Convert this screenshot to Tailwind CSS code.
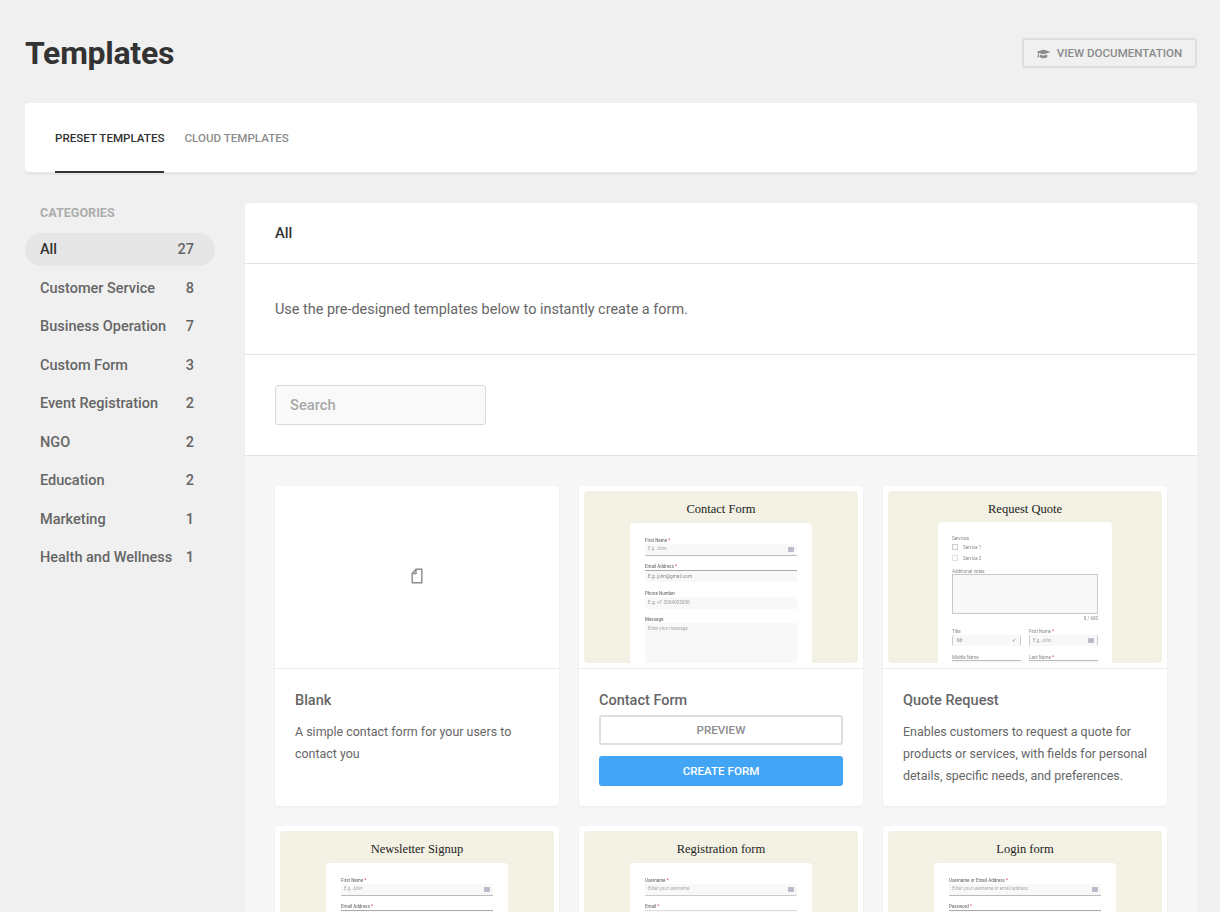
<!DOCTYPE html>
<html lang="en">
<head>
  <meta charset="UTF-8" />
  <title>Templates</title>
  <script src="https://cdn.jsdelivr.net/npm/@tailwindcss/browser@4"></script>
</head>
<body class="bg-[#f0f0f0] text-[#383838] font-[Roboto,sans-serif] h-[912px] overflow-hidden">
  <div class="pl-[25px] pr-[23px]">
    <!-- Header -->
    <header class="flex items-center justify-between pt-[38px] h-[103px] pb-[35px]">
      <h1 class="text-[32px] leading-[30px] font-bold tracking-[-0.27px] text-[#333]">Templates</h1>
      <button class="h-[30px] w-[175px] border-2 border-[#dedede] rounded-[3px] pt-px flex items-center justify-center gap-[7px] text-[11.55px] font-medium text-[#8a8a8a]">
        <svg class="w-[13px] h-[11px]" viewBox="0 0 640 512" fill="#8a8a8a"><path d="M622 160 334 71a48 48 0 0 0-28 0L18 160c-24 7-24 41 0 48l50 16c-11 14-18 31-19 50-9 5-15 15-15 26 0 10 5 19 13 25L21 423c-2 10 5 19 15 19h56c10 0 17-9 15-19L81 325c8-6 13-15 13-25 0-11-6-21-14-26 1-19 11-36 26-47l200 62c13 4 28 6 28 0l288-89c24-7 24-41 0-48zM352 352c-28 9-53 4-64 0l-145-45-15 115c0 35 86 64 192 64s192-29 192-64l-15-115z"/></svg>
        VIEW DOCUMENTATION
      </button>
    </header>

    <!-- Tabs -->
    <div class="bg-white rounded-[4px] h-[69px] px-[30px] flex gap-[20px] shadow-[0_3px_0_#e6e6e6] text-[11.6px] font-medium">
      <a class="flex items-center pt-[2px] shadow-[inset_0_-2px_0_#333] text-[#333] h-[70px]">PRESET TEMPLATES</a>
      <a class="flex items-center pt-[2px] text-[#8c8c8c] h-[70px]">CLOUD TEMPLATES</a>
    </div>

    <div class="flex gap-[30px] mt-[31px]">
      <!-- Sidebar -->
      <aside class="w-[190px] shrink-0">
        <div class="px-[15px] text-[12.6px] font-bold text-[#adadad] leading-[20px] mb-[10px]">CATEGORIES</div>
        <ul class="flex flex-col text-[14.5px] font-medium text-[#666]">
          <li class="h-[33px] rounded-full bg-[#e6e6e6] pl-[15px] pr-[21px] flex items-center justify-between text-[#333]"><span>All</span><span class="text-[#666]">27</span></li>
          <li class="h-[33px] mt-[6px] pl-[15px] pr-[21px] flex items-center justify-between"><span>Customer Service</span><span>8</span></li>
          <li class="h-[33px] mt-[5px] pl-[15px] pr-[21px] flex items-center justify-between"><span>Business Operation</span><span>7</span></li>
          <li class="h-[33px] mt-[6px] pl-[15px] pr-[21px] flex items-center justify-between"><span>Custom Form</span><span>3</span></li>
          <li class="h-[33px] mt-[5px] pl-[15px] pr-[21px] flex items-center justify-between"><span>Event Registration</span><span>2</span></li>
          <li class="h-[33px] mt-[6px] pl-[15px] pr-[21px] flex items-center justify-between"><span>NGO</span><span>2</span></li>
          <li class="h-[33px] mt-[5px] pl-[15px] pr-[21px] flex items-center justify-between"><span>Education</span><span>2</span></li>
          <li class="h-[33px] mt-[6px] pl-[15px] pr-[21px] flex items-center justify-between"><span>Marketing</span><span>1</span></li>
          <li class="h-[33px] mt-[5px] pl-[15px] pr-[21px] flex items-center justify-between"><span>Health and Wellness</span><span>1</span></li>
        </ul>
      </aside>

      <!-- Main -->
      <main class="flex-1 bg-white rounded-t-[4px]">
        <div class="h-[61px] px-[30px] flex items-center border-b border-[#e3e3e3] text-[14.8px] font-medium text-[#333]">All</div>
        <div class="h-[91px] px-[30px] pt-[2px] flex items-center border-b border-[#e3e3e3] text-[14.45px] text-[#666]">Use the pre-designed templates below to instantly create a form.</div>
        <div class="h-[101px] px-[30px] flex items-center border-b border-[#e3e3e3]">
          <div class="w-[211px] h-[40px] border border-[#d9d9d9] rounded-[3px] bg-[#f9f9f9] px-[14px] flex items-center text-[14.7px] font-medium text-[#a8a8a8]">Search</div>
        </div>

        <!-- Template grid -->
        <div class="bg-[#f7f7f7] p-[30px] grid grid-cols-3 gap-[20px]">
          <!-- Blank -->
          <article class="bg-white rounded-[4px] h-[320px] shadow-[0_1px_3px_rgba(0,0,0,0.06)]">
            <div class="h-[183px] border-b border-[#ececec] flex items-center justify-center">
              <svg class="w-[12px] h-[16px] mt-[-2px]" viewBox="0 0 12 16" fill="none" stroke="#8c8c8c" stroke-width="1.4"><path d="M1.2 14.8V5.5L5 1.2h5.8v13.6z"/><path d="M5 1.5v4H1.5"/></svg>
            </div>
            <div class="px-[20px] pt-[21px]">
              <h3 class="text-[14.5px] leading-[22px] font-medium text-[#666]">Blank</h3>
              <p class="mt-[9px] text-[12.45px] leading-[22px] text-[#666]">A simple contact form for your users to contact you</p>
            </div>
          </article>

          <!-- Contact Form -->
          <article class="bg-white rounded-[4px] h-[320px] shadow-[0_1px_3px_rgba(0,0,0,0.06)]">
            <div class="h-[183px] border-b border-[#ececec] p-[5px]">
              <div class="h-[172px] rounded-[4px] bg-[#f3f1e3] overflow-hidden flex flex-col items-center">
                <div class="h-[32px] shrink-0 pt-[10px] font-['Liberation_Serif',serif] text-[12.5px] leading-[16px] text-[#222]">Contact Form</div>
                <div class="w-[182px] flex-1 bg-white rounded-t-[4px] px-[15px] pt-[13.5px] text-[4.5px] text-[#777] blur-[0.3px]">
                  <div class="h-[7px] leading-[7px] font-medium">First Name <span class="text-[#e0245e]">*</span></div>
                  <div class="h-[12px] bg-[#f8f8f8] border-b border-[#bbb] rounded-[1px] px-[3px] flex items-center justify-between text-[#aaa]"><span>E.g. John</span><span class="w-[6px] h-[5px] bg-[#b8bccb] rounded-[1px]"></span></div>
                  <div class="h-[7px] leading-[7px] font-medium mt-[7.5px]">Email Address <span class="text-[#e0245e]">*</span></div>
                  <div class="h-[12px] bg-[#f8f8f8] border-t border-[#aaa] px-[3px] flex items-center text-[4.7px] text-[#888]">E.g. john@gmail.com</div>
                  <div class="h-[7px] leading-[7px] font-medium mt-[7.5px]">Phone Number</div>
                  <div class="h-[12px] bg-[#f8f8f8] rounded-[1px] px-[3px] flex items-center text-[4.7px] text-[#999]">E.g. +1 3004005000</div>
                  <div class="h-[7px] leading-[7px] font-medium mt-[7.5px]">Message</div>
                  <div class="h-[50px] bg-[#f8f8f8] px-[3px] pt-[2px] leading-[7px] text-[#aaa]">Enter your message</div>
                </div>
              </div>
            </div>
            <div class="px-[20px] pt-[21px]">
              <h3 class="text-[14.5px] leading-[22px] font-medium text-[#666]">Contact Form</h3>
              <div class="mt-[3px] h-[30px] pt-px border-2 border-[#dedede] rounded-[3px] flex items-center justify-center text-[11.6px] font-medium text-[#8c8c8c]">PREVIEW</div>
              <div class="mt-[11px] h-[30px] pt-[2px] bg-[#42a5f5] rounded-[3px] flex items-center justify-center text-[11.6px] font-medium text-white">CREATE FORM</div>
            </div>
          </article>

          <!-- Quote Request -->
          <article class="bg-white rounded-[4px] h-[320px] shadow-[0_1px_3px_rgba(0,0,0,0.06)]">
            <div class="h-[183px] border-b border-[#ececec] p-[5px]">
              <div class="h-[172px] rounded-[4px] bg-[#f3f1e3] overflow-hidden flex flex-col items-center">
                <div class="h-[31px] shrink-0 pt-[10px] font-['Liberation_Serif',serif] text-[12.5px] leading-[16px] text-[#222]">Request Quote</div>
                <div class="w-[174px] flex-1 bg-white rounded-t-[4px] px-[14px] pt-[13px] text-[4.5px] leading-[7px] text-[#888] blur-[0.3px]">
                  <div class="h-[7px]">Services</div>
                  <div class="mt-[2px] h-[6px] flex items-center gap-[5px]"><span class="w-[6px] h-[6px] border border-[#ccc]"></span>Service 1</div>
                  <div class="mt-[5px] h-[6px] flex items-center gap-[5px]"><span class="w-[6px] h-[6px] border border-[#e3e3e3]"></span>Service 2</div>
                  <div class="mt-[7px] h-[7px]">Additional notes</div>
                  <div class="mt-[-1px] h-[40px] bg-[#f8f8f8] border border-[#c8c8c8]"></div>
                  <div class="h-[8px] mt-[1px] text-right">0 / 600</div>
                  <div class="mt-[5px] grid grid-cols-2 gap-x-[8px]">
                    <div>
                      <div class="h-[7px]">Title</div>
                      <div class="h-[11px] bg-[#f8f8f8] border-x border-[#ccc] rounded-[2px] px-[4px] flex items-center justify-between"><span>Mr</span><span class="text-[#777]">&#10003;</span></div>
                    </div>
                    <div>
                      <div class="h-[7px]">First Name <span class="text-[#e0245e]">*</span></div>
                      <div class="h-[11px] bg-[#f8f8f8] border-x border-[#ccc] rounded-[2px] px-[3px] flex items-center justify-between text-[#aaa]"><span>E.g. John</span><span class="w-[6px] h-[5px] bg-[#b8bccb] rounded-[1px]"></span></div>
                    </div>
                    <div class="mt-[8px]">
                      <div class="h-[6px]">Middle Name</div>
                      <div class="h-[11px] border-t border-[#bbb] bg-[#f8f8f8]"></div>
                    </div>
                    <div class="mt-[8px]">
                      <div class="h-[6px]">Last Name <span class="text-[#e0245e]">*</span></div>
                      <div class="h-[11px] border-t border-[#bbb] bg-[#f8f8f8]"></div>
                    </div>
                  </div>
                </div>
              </div>
            </div>
            <div class="px-[20px] pt-[21px]">
              <h3 class="text-[14.5px] leading-[22px] font-medium text-[#666]">Quote Request</h3>
              <p class="mt-[9px] w-[250px] text-[12.45px] leading-[22px] text-[#666]">Enables customers to request a quote for products or services, with fields for personal details, specific needs, and preferences.</p>
            </div>
          </article>

          <!-- Newsletter Signup -->
          <article class="bg-white rounded-[4px] h-[320px] shadow-[0_1px_3px_rgba(0,0,0,0.06)]">
            <div class="h-[183px] border-b border-[#ececec] p-[5px]">
              <div class="h-[172px] rounded-[4px] bg-[#f3f1e3] overflow-hidden flex flex-col items-center">
                <div class="h-[32px] shrink-0 pt-[10px] font-['Liberation_Serif',serif] text-[12.5px] leading-[16px] text-[#222]">Newsletter Signup</div>
                <div class="w-[182px] flex-1 bg-white rounded-t-[4px] px-[15px] pt-[13.5px] text-[4.5px] text-[#777] blur-[0.3px]">
                  <div class="h-[7px] leading-[7px] font-medium">First Name <span class="text-[#e0245e]">*</span></div>
                  <div class="h-[12px] bg-[#f8f8f8] border-b border-[#bbb] rounded-[1px] px-[3px] flex items-center justify-between text-[#aaa]"><span>E.g. John</span><span class="w-[6px] h-[5px] bg-[#b8bccb] rounded-[1px]"></span></div>
                  <div class="h-[7px] leading-[7px] font-medium mt-[7.5px]">Email Address <span class="text-[#e0245e]">*</span></div>
                  <div class="h-[12px] bg-[#f8f8f8] border-t border-[#aaa]"></div>
                </div>
              </div>
            </div>
          </article>

          <!-- Registration form -->
          <article class="bg-white rounded-[4px] h-[320px] shadow-[0_1px_3px_rgba(0,0,0,0.06)]">
            <div class="h-[183px] border-b border-[#ececec] p-[5px]">
              <div class="h-[172px] rounded-[4px] bg-[#f3f1e3] overflow-hidden flex flex-col items-center">
                <div class="h-[32px] shrink-0 pt-[10px] font-['Liberation_Serif',serif] text-[12.5px] leading-[16px] text-[#222]">Registration form</div>
                <div class="w-[182px] flex-1 bg-white rounded-t-[4px] px-[15px] pt-[13.5px] text-[4.5px] text-[#777] blur-[0.3px]">
                  <div class="h-[7px] leading-[7px] font-medium">Username <span class="text-[#e0245e]">*</span></div>
                  <div class="h-[12px] bg-[#f8f8f8] border-b border-[#ccc] rounded-[1px] px-[3px] flex items-center justify-between text-[#aaa]"><span>Enter your username</span><span class="w-[6px] h-[5px] bg-[#b8bccb] rounded-[1px]"></span></div>
                  <div class="h-[7px] leading-[7px] font-medium mt-[7.5px]">Email <span class="text-[#e0245e]">*</span></div>
                  <div class="h-[12px] bg-[#f8f8f8] border-t border-[#ddd]"></div>
                </div>
              </div>
            </div>
          </article>

          <!-- Login form -->
          <article class="bg-white rounded-[4px] h-[320px] shadow-[0_1px_3px_rgba(0,0,0,0.06)]">
            <div class="h-[183px] border-b border-[#ececec] p-[5px]">
              <div class="h-[172px] rounded-[4px] bg-[#f3f1e3] overflow-hidden flex flex-col items-center">
                <div class="h-[32px] shrink-0 pt-[10px] font-['Liberation_Serif',serif] text-[12.5px] leading-[16px] text-[#222]">Login form</div>
                <div class="w-[182px] flex-1 bg-white rounded-t-[4px] px-[15px] pt-[13.5px] text-[4.5px] text-[#777] blur-[0.3px]">
                  <div class="h-[7px] leading-[7px] font-medium">Username or Email Address <span class="text-[#e0245e]">*</span></div>
                  <div class="h-[12px] bg-[#f8f8f8] border-b border-[#bbb] rounded-[1px] px-[3px] flex items-center justify-between text-[#aaa]"><span>Enter your username or email address</span><span class="w-[6px] h-[5px] bg-[#b8bccb] rounded-[1px]"></span></div>
                  <div class="h-[7px] leading-[7px] font-medium mt-[7.5px]">Password <span class="text-[#e0245e]">*</span></div>
                  <div class="h-[12px] bg-[#f8f8f8] border-t border-[#aaa]"></div>
                </div>
              </div>
            </div>
          </article>
        </div>
      </main>
    </div>
  </div>
</body>
</html>
